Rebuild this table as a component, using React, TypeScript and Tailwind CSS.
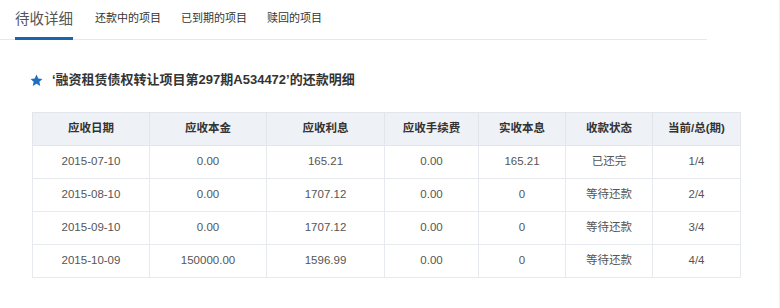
import React from "react";

const rows = [
  ["2015-07-10", "0.00", "165.21", "0.00", "165.21", "已还完", "1/4"],
  ["2015-08-10", "0.00", "1707.12", "0.00", "0", "等待还款", "2/4"],
  ["2015-09-10", "0.00", "1707.12", "0.00", "0", "等待还款", "3/4"],
  ["2015-10-09", "150000.00", "1596.99", "0.00", "0", "等待还款", "4/4"],
];
const heads = ["应收日期", "应收本金", "应收利息", "应收手续费", "实收本息", "收款状态", "当前/总(期)"];
const widths = [117, 117, 118, 94, 87, 87, 88];

export default function App() {
  return (
    <div
      className="relative w-[780px] h-[308px] bg-white overflow-hidden border-r border-[#f0f1f3]"
      style={{ fontFamily: '"Liberation Sans", "Noto Sans CJK SC", sans-serif' }}
    >
      <div className="flex items-end w-[707px] h-[40px] border-b border-[#e6e8eb] pl-[15px]">
        <div className="h-[40px] -mb-px flex items-center border-b-[3px] border-[#1a64b0] text-[14.5px] text-[#555] pt-[2px]">
          待收详细
        </div>
        <div className="flex items-center gap-[20px] ml-[22px] h-[40px] text-[11px] text-[#333] pb-[1px]">
          <span>还款中的项目</span>
          <span>已到期的项目</span>
          <span>赎回的项目</span>
        </div>
      </div>

      <div className="flex items-center pl-[30px] pt-[32px] h-[48px]">
        <svg width="13" height="13" viewBox="0 0 24 24" className="shrink-0">
          <path
            d="M12 1l3.3 7.1 7.7.9-5.7 5.3 1.6 7.7L12 18.2l-6.9 3.8 1.6-7.7L1 9l7.7-.9z"
            fill="#1f6ec0"
          />
        </svg>
        <span className="ml-[9px] text-[13px] font-bold text-[#333]">
          ‘融资租赁债权转让项目第297期A534472’的还款明细
        </span>
      </div>

      <table className="ml-[32px] mt-[24px] border-collapse table-fixed w-[708px] text-[11.5px]">
        <colgroup>
          {widths.map((w, i) => (
            <col key={i} style={{ width: w }} />
          ))}
        </colgroup>
        <thead>
          <tr className="bg-[#eef1f5]">
            {heads.map((h) => (
              <th key={h} className="h-[33px] border border-[#e2e6ec] font-bold text-[#333] text-center p-0">
                {h}
              </th>
            ))}
          </tr>
        </thead>
        <tbody>
          {rows.map((r, i) => (
            <tr key={i}>
              {r.map((c, j) => (
                <td key={j} className="h-[33px] border border-[#e6e9ee] text-[#555] text-center p-0">
                  {c}
                </td>
              ))}
            </tr>
          ))}
        </tbody>
      </table>
    </div>
  );
}
